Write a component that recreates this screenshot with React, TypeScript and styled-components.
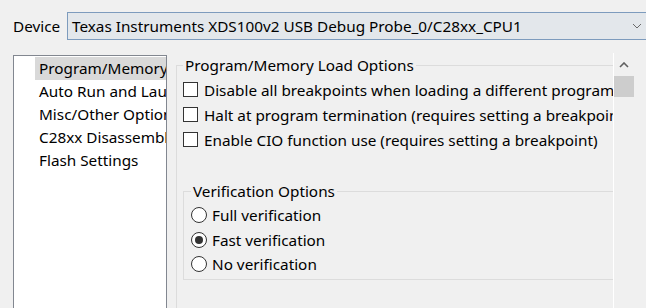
import React from 'react';
import styled, { createGlobalStyle } from 'styled-components';

const GlobalStyle = createGlobalStyle`
  html, body {
    margin: 0;
    padding: 0;
    background: #f0f0f0;
  }
  body {
    font-family: "Noto Sans", "Open Sans", sans-serif;
    font-size: 15.3px;
    color: #000;
  }
`;

const Window = styled.div`
  width: 646px;
  height: 308px;
  overflow: hidden;
  background: #f0f0f0;
  display: flex;
  flex-direction: column;
`;

const DeviceRow = styled.div`
  display: flex;
  align-items: center;
  padding: 12px 0 0 13px;
`;

const DeviceLabel = styled.span`
  width: 54px;
  line-height: 28px;
`;

const Combo = styled.div`
  flex: 1;
  height: 28px;
  box-sizing: border-box;
  display: flex;
  align-items: center;
  justify-content: space-between;
  padding: 0 4px 0 4px;
  background: #e3e7eb;
  border: 1px solid #7d9bbd;
  border-right: none;
  white-space: nowrap;
`;

const Body = styled.div`
  flex: 1;
  display: flex;
  margin-top: 15px;
  padding-left: 13px;
  min-height: 0;
`;

const ListBox = styled.ul`
  width: 154px;
  box-sizing: border-box;
  margin: 0;
  padding: 1px 0 0 0;
  list-style: none;
  background: #fff;
  border: 1px solid #828790;
  border-bottom: none;
  overflow: hidden;
  flex-shrink: 0;
`;

const ListItem = styled.li<{ $selected?: boolean }>`
  height: 23px;
  line-height: 23px;
  margin-left: 21px;
  padding-left: 4px;
  white-space: nowrap;
  background: ${p => (p.$selected ? '#d9d9d9' : 'transparent')};
`;

const Pane = styled.div`
  width: 446px;
  flex-shrink: 0;
  overflow: hidden;
  padding-left: 9px;
  box-sizing: border-box;
`;

const Group = styled.fieldset<{ $width: number }>`
  margin: 0;
  width: ${p => p.$width}px;
  box-sizing: border-box;
  border: 1px solid #dcdcdc;
  padding: 0 0 2px 6px;
  min-width: 0;
`;

const OuterGroup = styled(Group)`
  min-height: 400px;
`;

const InnerGroup = styled(Group)`
  margin-top: 29px;
  padding-left: 7px;
`;

const Legend = styled.legend`
  padding: 0 2px;
  line-height: 20px;
  white-space: nowrap;
`;

const Rows = styled.div`
  padding-top: 2px;
`;

const Row = styled.label<{ $height: number }>`
  display: flex;
  align-items: center;
  height: ${p => p.$height}px;
  white-space: nowrap;
`;

const CheckBox = styled.span`
  width: 15px;
  height: 15px;
  box-sizing: border-box;
  border: 1px solid #333;
  background: #fff;
  margin-right: 6px;
  flex-shrink: 0;
`;

const Radio = styled.span<{ $checked?: boolean }>`
  width: 16px;
  height: 16px;
  box-sizing: border-box;
  border-radius: 50%;
  border: 1px solid #333;
  background: #fff;
  margin-right: 5px;
  flex-shrink: 0;
  display: flex;
  align-items: center;
  justify-content: center;

  &::after {
    content: '';
    width: 8px;
    height: 8px;
    border-radius: 50%;
    background: ${p => (p.$checked ? '#333' : 'transparent')};
  }
`;

const ScrollBar = styled.div`
  width: 20px;
  border-left: 1px solid #fff;
  flex-shrink: 0;
  display: flex;
  flex-direction: column;
  align-items: stretch;
  margin-top: -2px;
`;

const ScrollArrow = styled.div`
  height: 23px;
  display: flex;
  align-items: center;
  justify-content: center;
`;

const Thumb = styled.div`
  height: 21px;
  background: #cdcdcd;
`;

const Chevron = ({ up }: { up?: boolean }) => (
  <svg width="10" height="6" viewBox="0 0 10 6">
    <path
      d={up ? 'M1 5 L5 1 L9 5' : 'M1 1 L5 5 L9 1'}
      fill="none"
      stroke={up ? '#606060' : '#6a6a6a'}
      strokeWidth={up ? 1.6 : 1}
    />
  </svg>
);

const pages = [
  'Program/Memory Load Options',
  'Auto Run and Launch Options',
  'Misc/Other Options',
  'C28xx Disassembly Style',
  'Flash Settings',
];

const loadOptions = [
  'Disable all breakpoints when loading a different program',
  'Halt at program termination (requires setting a breakpoint)',
  'Enable CIO function use (requires setting a breakpoint)',
];

const verifyOptions = ['Full verification', 'Fast verification', 'No verification'];

export default function App() {
  return (
    <Window>
      <GlobalStyle />
      <DeviceRow>
        <DeviceLabel>Device</DeviceLabel>
        <Combo>
          <span>Texas Instruments XDS100v2 USB Debug Probe_0/C28xx_CPU1</span>
          <Chevron />
        </Combo>
      </DeviceRow>
      <Body>
        <ListBox>
          {pages.map((p, i) => (
            <ListItem key={p} $selected={i === 0}>{p}</ListItem>
          ))}
        </ListBox>
        <Pane>
          <OuterGroup $width={520}>
            <Legend>Program/Memory Load Options</Legend>
            <Rows>
              {loadOptions.map(o => (
                <Row key={o} $height={25}>
                  <CheckBox />
                  {o}
                </Row>
              ))}
            </Rows>
            <InnerGroup $width={500}>
              <Legend>Verification Options</Legend>
              <Rows>
                {verifyOptions.map((o, i) => (
                  <Row key={o} $height={24.6}>
                    <Radio $checked={i === 1} />
                    {o}
                  </Row>
                ))}
              </Rows>
            </InnerGroup>
          </OuterGroup>
        </Pane>
        <ScrollBar>
          <ScrollArrow>
            <Chevron up />
          </ScrollArrow>
          <Thumb />
        </ScrollBar>
      </Body>
    </Window>
  );
}
